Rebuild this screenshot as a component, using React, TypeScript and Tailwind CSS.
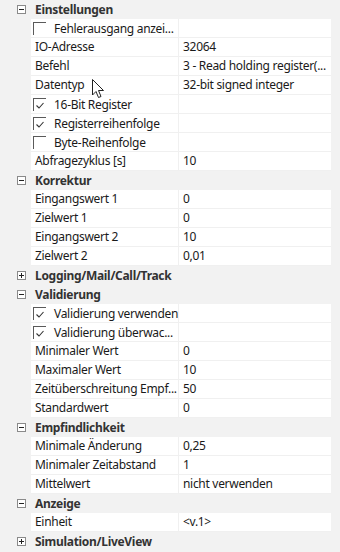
import React from "react";

type Row =
  | { kind: "cat"; label: string; open: boolean }
  | { kind: "prop"; label: string; value?: string; check?: boolean };

const rows: Row[] = [
  { kind: "cat", label: "Einstellungen", open: true },
  { kind: "prop", label: "Fehlerausgang anzei...", check: false },
  { kind: "prop", label: "IO-Adresse", value: "32064" },
  { kind: "prop", label: "Befehl", value: "3 - Read holding register(..." },
  { kind: "prop", label: "Datentyp", value: "32-bit signed integer" },
  { kind: "prop", label: "16-Bit Register", check: true },
  { kind: "prop", label: "Registerreihenfolge", check: true },
  { kind: "prop", label: "Byte-Reihenfolge", check: false },
  { kind: "prop", label: "Abfragezyklus [s]", value: "10" },
  { kind: "cat", label: "Korrektur", open: true },
  { kind: "prop", label: "Eingangswert 1", value: "0" },
  { kind: "prop", label: "Zielwert 1", value: "0" },
  { kind: "prop", label: "Eingangswert 2", value: "10" },
  { kind: "prop", label: "Zielwert 2", value: "0,01" },
  { kind: "cat", label: "Logging/Mail/Call/Track", open: false },
  { kind: "cat", label: "Validierung", open: true },
  { kind: "prop", label: "Validierung verwenden", check: true },
  { kind: "prop", label: "Validierung überwac...", check: true },
  { kind: "prop", label: "Minimaler Wert", value: "0" },
  { kind: "prop", label: "Maximaler Wert", value: "10" },
  { kind: "prop", label: "Zeitüberschreitung Empf...", value: "50" },
  { kind: "prop", label: "Standardwert", value: "0" },
  { kind: "cat", label: "Empfindlichkeit", open: true },
  { kind: "prop", label: "Minimale Änderung", value: "0,25" },
  { kind: "prop", label: "Minimaler Zeitabstand", value: "1" },
  { kind: "prop", label: "Mittelwert", value: "nicht verwenden" },
  { kind: "cat", label: "Anzeige", open: true },
  { kind: "prop", label: "Einheit", value: "<v.1>" },
  { kind: "cat", label: "Simulation/LiveView", open: false },
];

function ExpandBox({ open }: { open: boolean }) {
  return (
    <svg width="9" height="9" viewBox="0 0 9 9" className="block">
      <rect x="0.5" y="0.5" width="8" height="8" fill="#fff" stroke="#8a8a8a" />
      <line x1="2" y1="4.5" x2="7" y2="4.5" stroke="#222" />
      {!open && <line x1="4.5" y1="2" x2="4.5" y2="7" stroke="#222" />}
    </svg>
  );
}

function Checkbox({ checked }: { checked: boolean }) {
  return (
    <div className="w-[13px] h-[13px] border-t border-l border-[#5a5a5a] bg-white shrink-0 flex items-center justify-center">
      {checked && (
        <svg width="10" height="9" viewBox="0 0 10 9">
          <path d="M1.5 4.5 L4 7 L8.5 2" fill="none" stroke="#333" strokeWidth="1.1" />
        </svg>
      )}
    </div>
  );
}

export default function App() {
  return (
    <div
      className="relative w-[340px] h-[552px] bg-[#f2f2f2] overflow-hidden text-[12px] tracking-[-0.3px] text-[#1a1a1a]"
      style={{ fontFamily: '"Noto Sans", sans-serif' }}
    >
      {rows.map((r, i) =>
        r.kind === "cat" ? (
          <div key={i} className="flex items-center h-[19px]">
            <div className="w-[35px] shrink-0 pl-[17px]">
              <ExpandBox open={r.open} />
            </div>
            <span className="font-bold text-[#333] leading-none whitespace-nowrap">{r.label}</span>
          </div>
        ) : (
          <div key={i} className="flex h-[19px] pl-[31px] pr-[9px]">
            <div className="flex flex-1 bg-white border-b border-[#f0f0f0]">
              <div className="w-[148px] shrink-0 flex items-center border-r border-[#f0f0f0] overflow-hidden whitespace-nowrap">
                {r.check !== undefined ? (
                  <div className="flex items-center pl-[2px] gap-[8px] h-full pt-[1px] self-start">
                    <Checkbox checked={r.check} />
                    <span className="leading-none">{r.label}</span>
                  </div>
                ) : (
                  <span className="pl-[4px] leading-none">{r.label}</span>
                )}
              </div>
              <div className="flex-1 flex items-center pl-[4px] whitespace-nowrap overflow-hidden">
                <span className="leading-none">{r.value}</span>
              </div>
            </div>
          </div>
        )
      )}
      <svg
        className="absolute left-[92px] top-[79px]"
        width="13"
        height="20"
        viewBox="0 0 13 20"
      >
        <path
          d="M0.5 0.5 L0.5 16 L4 12.5 L6.5 18.5 L9 17.5 L6.5 11.5 L11.5 11.5 Z"
          fill="#fff"
          stroke="#222"
          strokeWidth="1"
        />
      </svg>
    </div>
  );
}
